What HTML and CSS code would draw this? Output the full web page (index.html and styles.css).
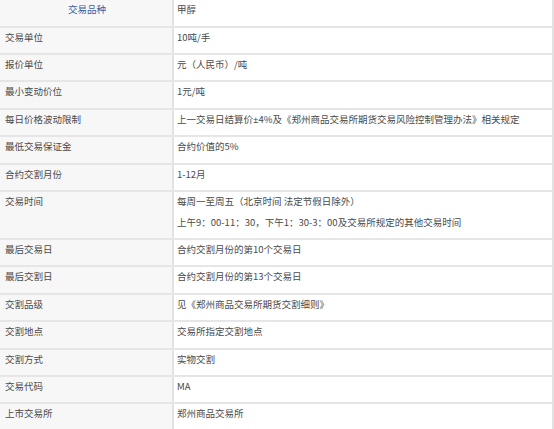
FILE: index.html
```html
<!DOCTYPE html>
<html lang="zh-CN">
<head>
<meta charset="utf-8">
<title>甲醇期货合约</title>
<link rel="stylesheet" href="styles.css">
</head>
<body>
<div class="spec">
  <div class="row"><div class="key head">交易品种</div><div class="val"><p>甲醇</p></div></div>
  <div class="row"><div class="key">交易单位</div><div class="val"><p>10吨/手</p></div></div>
  <div class="row"><div class="key">报价单位</div><div class="val"><p>元（人民币）/吨</p></div></div>
  <div class="row"><div class="key">最小变动价位</div><div class="val"><p>1元/吨</p></div></div>
  <div class="row"><div class="key">每日价格波动限制</div><div class="val"><p>上一交易日结算价<span class="lat">±</span>4%及《郑州商品交易所期货交易风险控制管理办法》相关规定</p></div></div>
  <div class="row"><div class="key">最低交易保证金</div><div class="val"><p>合约价值的5%</p></div></div>
  <div class="row"><div class="key">合约交割月份</div><div class="val"><p>1-12月</p></div></div>
  <div class="row tall"><div class="key">交易时间</div><div class="val"><p>每周一至周五（北京时间 法定节假日除外）</p><p>上午9：00-11：30，下午1：30-3：00及交易所规定的其他交易时间</p></div></div>
  <div class="row"><div class="key">最后交易日</div><div class="val"><p>合约交割月份的第10个交易日</p></div></div>
  <div class="row"><div class="key">最后交割日</div><div class="val"><p>合约交割月份的第13个交易日</p></div></div>
  <div class="row"><div class="key">交割品级</div><div class="val"><p>见《郑州商品交易所期货交割细则》</p></div></div>
  <div class="row"><div class="key">交割地点</div><div class="val"><p>交易所指定交割地点</p></div></div>
  <div class="row"><div class="key">交割方式</div><div class="val"><p>实物交割</p></div></div>
  <div class="row"><div class="key">交易代码</div><div class="val"><p>MA</p></div></div>
  <div class="row"><div class="key">上市交易所</div><div class="val"><p>郑州商品交易所</p></div></div>
</div>
</body>
</html>
```

FILE: styles.css
```css
html, body {
  margin: 0;
  padding: 0;
  background: #ffffff;
}
body {
  font-family: "Noto Sans CJK SC", "Noto Sans", sans-serif;
  font-size: 9.5px;
  color: #4a4a4a;
  width: 554px;
  height: 429px;
  overflow: hidden;
}
.spec {
  display: flex;
  flex-direction: column;
  width: 554px;
  box-sizing: border-box;
  border-right: 2px solid #e2e2e2;
  padding-top: 0.3px;
}
.row {
  display: flex;
  height: 27.4px;
  flex: none;
  box-sizing: border-box;
  border-bottom: 2px solid #e6e6e6;
}
.row.tall {
  height: 48px;
}
.key {
  width: 174px;
  flex: none;
  background: #f7f7f7;
  border-right: 2px solid #e2e2e2;
  padding: 3px 0 0 5px;
  box-sizing: border-box;
  line-height: 13px;
}
.key.head {
  text-align: center;
  padding-left: 2px;
  color: #3a5ba6;
}
.val {
  flex: 1;
  padding: 3px 0 0 3px;
  line-height: 13px;
}
.val p {
  margin: 0 0 8px;
}
.lat {
  font-family: "Noto Sans", sans-serif;
}
```
